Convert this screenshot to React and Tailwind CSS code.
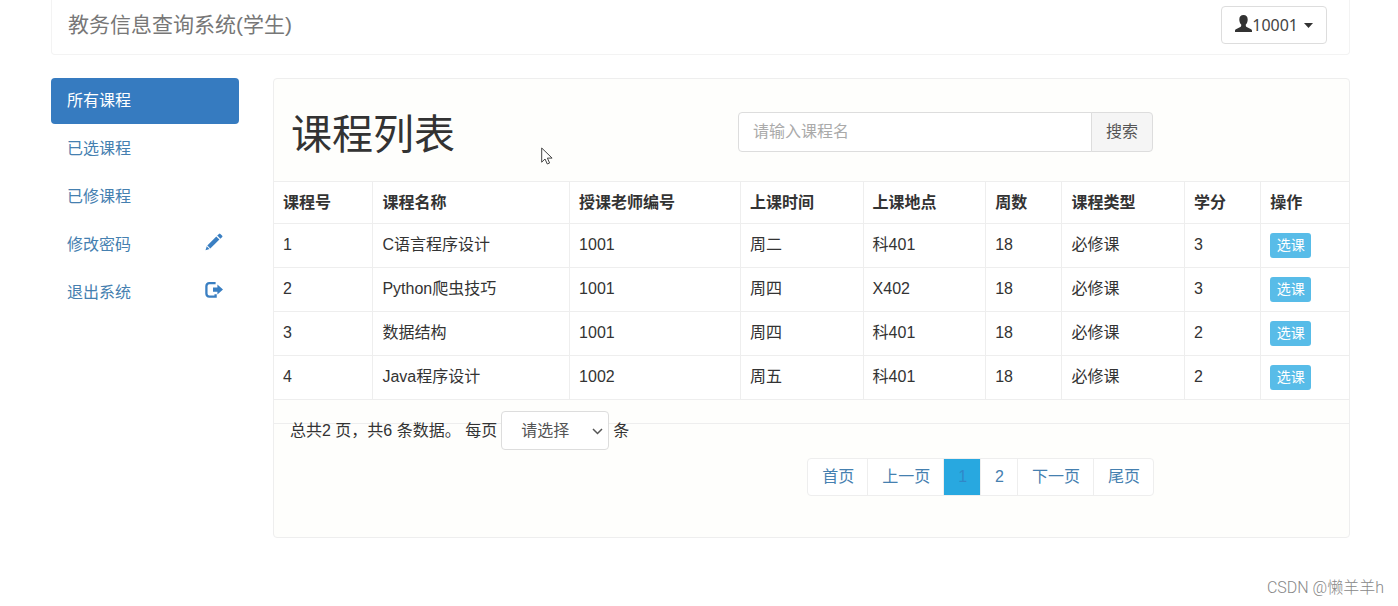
import React from "react";

const NAV_ITEMS = [
  { label: "所有课程", active: true },
  { label: "已选课程" },
  { label: "已修课程" },
  { label: "修改密码", icon: PencilIcon },
  { label: "退出系统", icon: LogoutIcon },
];

const COLUMNS = [
  { title: "课程号", width: "w-[9.2%]" },
  { title: "课程名称", width: "w-[18.3%]" },
  { title: "授课老师编号", width: "w-[15.9%]" },
  { title: "上课时间", width: "w-[11.4%]" },
  { title: "上课地点", width: "w-[11.4%]" },
  { title: "周数", width: "w-[7.1%]" },
  { title: "课程类型", width: "w-[11.4%]" },
  { title: "学分", width: "w-[7.1%]" },
  { title: "操作", width: "w-[8.2%]" },
];

const COURSES = [
  ["1", "C语言程序设计", "1001", "周二", "科401", "18", "必修课", "3"],
  ["2", "Python爬虫技巧", "1001", "周四", "X402", "18", "必修课", "3"],
  ["3", "数据结构", "1001", "周四", "科401", "18", "必修课", "2"],
  ["4", "Java程序设计", "1002", "周五", "科401", "18", "必修课", "2"],
];

const PAGES = [
  { label: "首页" },
  { label: "上一页" },
  { label: "1", current: true },
  { label: "2" },
  { label: "下一页" },
  { label: "尾页" },
];

function PencilIcon() {
  return (
    <svg className="mb-[6px] size-[18px]" viewBox="0 0 18 18" fill="#3a7fc2" aria-hidden="true">
      <path d="M11.3 3.5 14.4 6.6 5.3 15.4 2.3 12.4z" />
      <path d="M1.7 13.2 4.5 16 0.5 17.3z" />
      <path d="M12.2 2.6 14 .9q.7-.6 1.4 0l1.8 1.8q.6.7 0 1.3L15.4 5.7z" />
    </svg>
  );
}

function LogoutIcon() {
  return (
    <svg className="mb-[6px] size-[18px]" viewBox="0 0 18 18" aria-hidden="true">
      <path
        d="M10.600 2.200H4.400Q1.400 2.200 1.400 5.200v7.400q0 3 3 3h6.200v-2.400"
        fill="none"
        stroke="#3a7fc2"
        strokeWidth="2.300"
      />
      <path d="M12.400 3.600 18 8.600l-5.600 5v-2.900H8V6.500h4.400z" fill="#3a7fc2" />
    </svg>
  );
}

function UserIcon() {
  return (
    <svg className="mb-[4px] h-[17px] w-[17px] shrink-0" viewBox="0 0 17 17" fill="#333" aria-hidden="true">
      <path d="M8.5 0c2.7 0 4.2 1.8 4.2 4.4 0 2.1-.8 4.1-1.9 5.2v1.2c0 .6.3 1 .9 1.3l3.900 1.800c.9.4 1.400 1 1.400 2V17H0v-1.100c0-1 .5-1.600 1.400-2l3.900-1.800c.6-.3.900-.7.900-1.300V9.600C5.100 8.500 4.300 6.500 4.300 4.400 4.300 1.800 5.800 0 8.500 0z" />
    </svg>
  );
}

function Header() {
  return (
    <header className="flex h-[55px] items-start justify-between rounded-b border border-t-0 border-[#f3f3f3] pr-[22px] pl-4">
      <a href="#" className="pt-[10px] text-[21px] leading-[30px] text-[#777]">
        教务信息查询系统(学生)
      </a>
      <button
        type="button"
        className="mt-[6px] flex h-[38px] items-center rounded border border-[#ddd] bg-white px-[13px] font-['Noto_Sans',sans-serif] text-base text-[#444]"
      >
        <UserIcon />
        <span>10001</span>
        <svg className="ml-[6px] h-[5px] w-[9px]" viewBox="0 0 9 5" fill="#333" aria-hidden="true">
          <path d="M0 0h9L4.500 5z" />
        </svg>
      </button>
    </header>
  );
}

function Sidebar() {
  return (
    <nav className="flex w-[188px] shrink-0 flex-col gap-[2px]">
      {NAV_ITEMS.map(({ label, active, icon: Icon }) => (
        <a
          key={label}
          href="#"
          className={
            active
              ? "flex h-[46px] items-center justify-between rounded bg-[#367bc0] px-4 text-white"
              : "flex h-[46px] items-center justify-between rounded px-4 text-[#4580b0]"
          }
        >
          {label}
          {Icon && <Icon />}
        </a>
      ))}
    </nav>
  );
}

function CourseTable() {
  return (
    <table className="w-full table-fixed border-collapse bg-white">
      <thead>
        <tr className="h-[42px]">
          {COLUMNS.map(({ title, width }) => (
            <th
              key={title}
              scope="col"
              className={`${width} border border-[#eee] px-[9px] text-left font-bold first:border-l-0 last:border-r-0`}
            >
              {title}
            </th>
          ))}
        </tr>
      </thead>
      <tbody>
        {COURSES.map((course) => (
          <tr key={course[0]} className="h-[44px]">
            {course.map((value, i) => (
              <td key={i} className="border border-[#eee] px-[9px] pb-[2px] first:border-l-0">
                {value}
              </td>
            ))}
            <td className="border border-r-0 border-[#eee] px-[9px]">
              <button
                type="button"
                className="block h-[25px] w-[41px] rounded-[3px] bg-[#58bce8] text-center text-sm leading-[25px] text-white"
              >
                选课
              </button>
            </td>
          </tr>
        ))}
      </tbody>
    </table>
  );
}

function PanelFooter() {
  return (
    <div className="h-[137px]">
      <div className="h-6 border-b border-[#eee]" />
      <div className="relative -mt-[13px] flex h-[39px] items-center pl-4">
        <label htmlFor="page-size" className="whitespace-pre">
          总共2 页，共6 条数据。 每页
        </label>
        <span className="relative ml-1">
          <select
            id="page-size"
            defaultValue=""
            className="block h-[39px] w-[108px] appearance-none rounded border border-[#ddd] bg-white pl-[19px] text-[#555]"
          >
            <option value="">请选择</option>
            <option value="4">4</option>
            <option value="8">8</option>
          </select>
          <svg
            className="pointer-events-none absolute top-[17px] right-[6px] h-[7px] w-[11px]"
            viewBox="0 0 11 7"
            fill="none"
            stroke="#555"
            strokeWidth="1.500"
            aria-hidden="true"
          >
            <path d="M1 1l4.500 4.500L10 1" />
          </svg>
        </span>
        <span className="ml-1">条</span>
      </div>
      <nav aria-label="分页" className="mt-2 mr-[195px] flex justify-end">
        <ul className="flex h-[38px] overflow-hidden rounded border border-[#eee] bg-white">
          {PAGES.map(({ label, current }) => (
            <li key={label} className="border-r border-[#eee] last:border-r-0">
              <a
                href="#"
                aria-current={current ? "page" : undefined}
                className={
                  current
                    ? "flex h-full items-center bg-[#28a8e0] pr-[13px] pl-[14px] text-[#3088c8]"
                    : "flex h-full items-center pr-[13px] pl-[14px] text-[#4580b0]"
                }
              >
                {label}
              </a>
            </li>
          ))}
        </ul>
      </nav>
    </div>
  );
}

export default function App() {
  return (
    <div className="relative min-h-screen bg-white pr-12 pl-[51px] font-['Liberation_Sans','Noto_Sans_CJK_SC',sans-serif] text-base text-[#333]">
      <Header />
      <div className="mt-[23px] flex items-start gap-[34px]">
        <Sidebar />
        <main className="min-w-0 flex-1 rounded border border-[#eee] bg-[#fefefc]">
          <div className="flex h-[102px] items-start pl-[17px]">
            <h1 className="w-[447px] pt-[26px] text-[41px] leading-[60px]">课程列表</h1>
            <form className="mt-[33px] flex h-10 w-[415px]" onSubmit={(e) => e.preventDefault()}>
              <input
                type="text"
                aria-label="课程名"
                placeholder="请输入课程名"
                className="min-w-0 flex-1 rounded-l border border-[#ddd] bg-white px-[14px] placeholder:text-[#aaa]"
              />
              <button
                type="submit"
                className="-ml-px w-[62px] rounded-r border border-[#ddd] bg-[#f5f5f5] text-[#555]"
              >
                搜索
              </button>
            </form>
          </div>
          <CourseTable />
          <PanelFooter />
        </main>
      </div>
      <svg
        className="pointer-events-none absolute top-[147px] left-[541px] h-[18px] w-[12px]"
        viewBox="0 0 12 18"
        fill="#fff"
        stroke="#444"
        aria-hidden="true"
      >
        <path d="M.7 1v14.200l3.300-3.200 2.300 5 2.300-1-2.200-4.900h4.700z" />
      </svg>
      <p className="absolute right-[14px] bottom-[6px] font-['Roboto','Noto_Sans_CJK_SC',sans-serif] text-base leading-6 font-light text-[#888]">
        CSDN @懒羊羊h
      </p>
    </div>
  );
}
